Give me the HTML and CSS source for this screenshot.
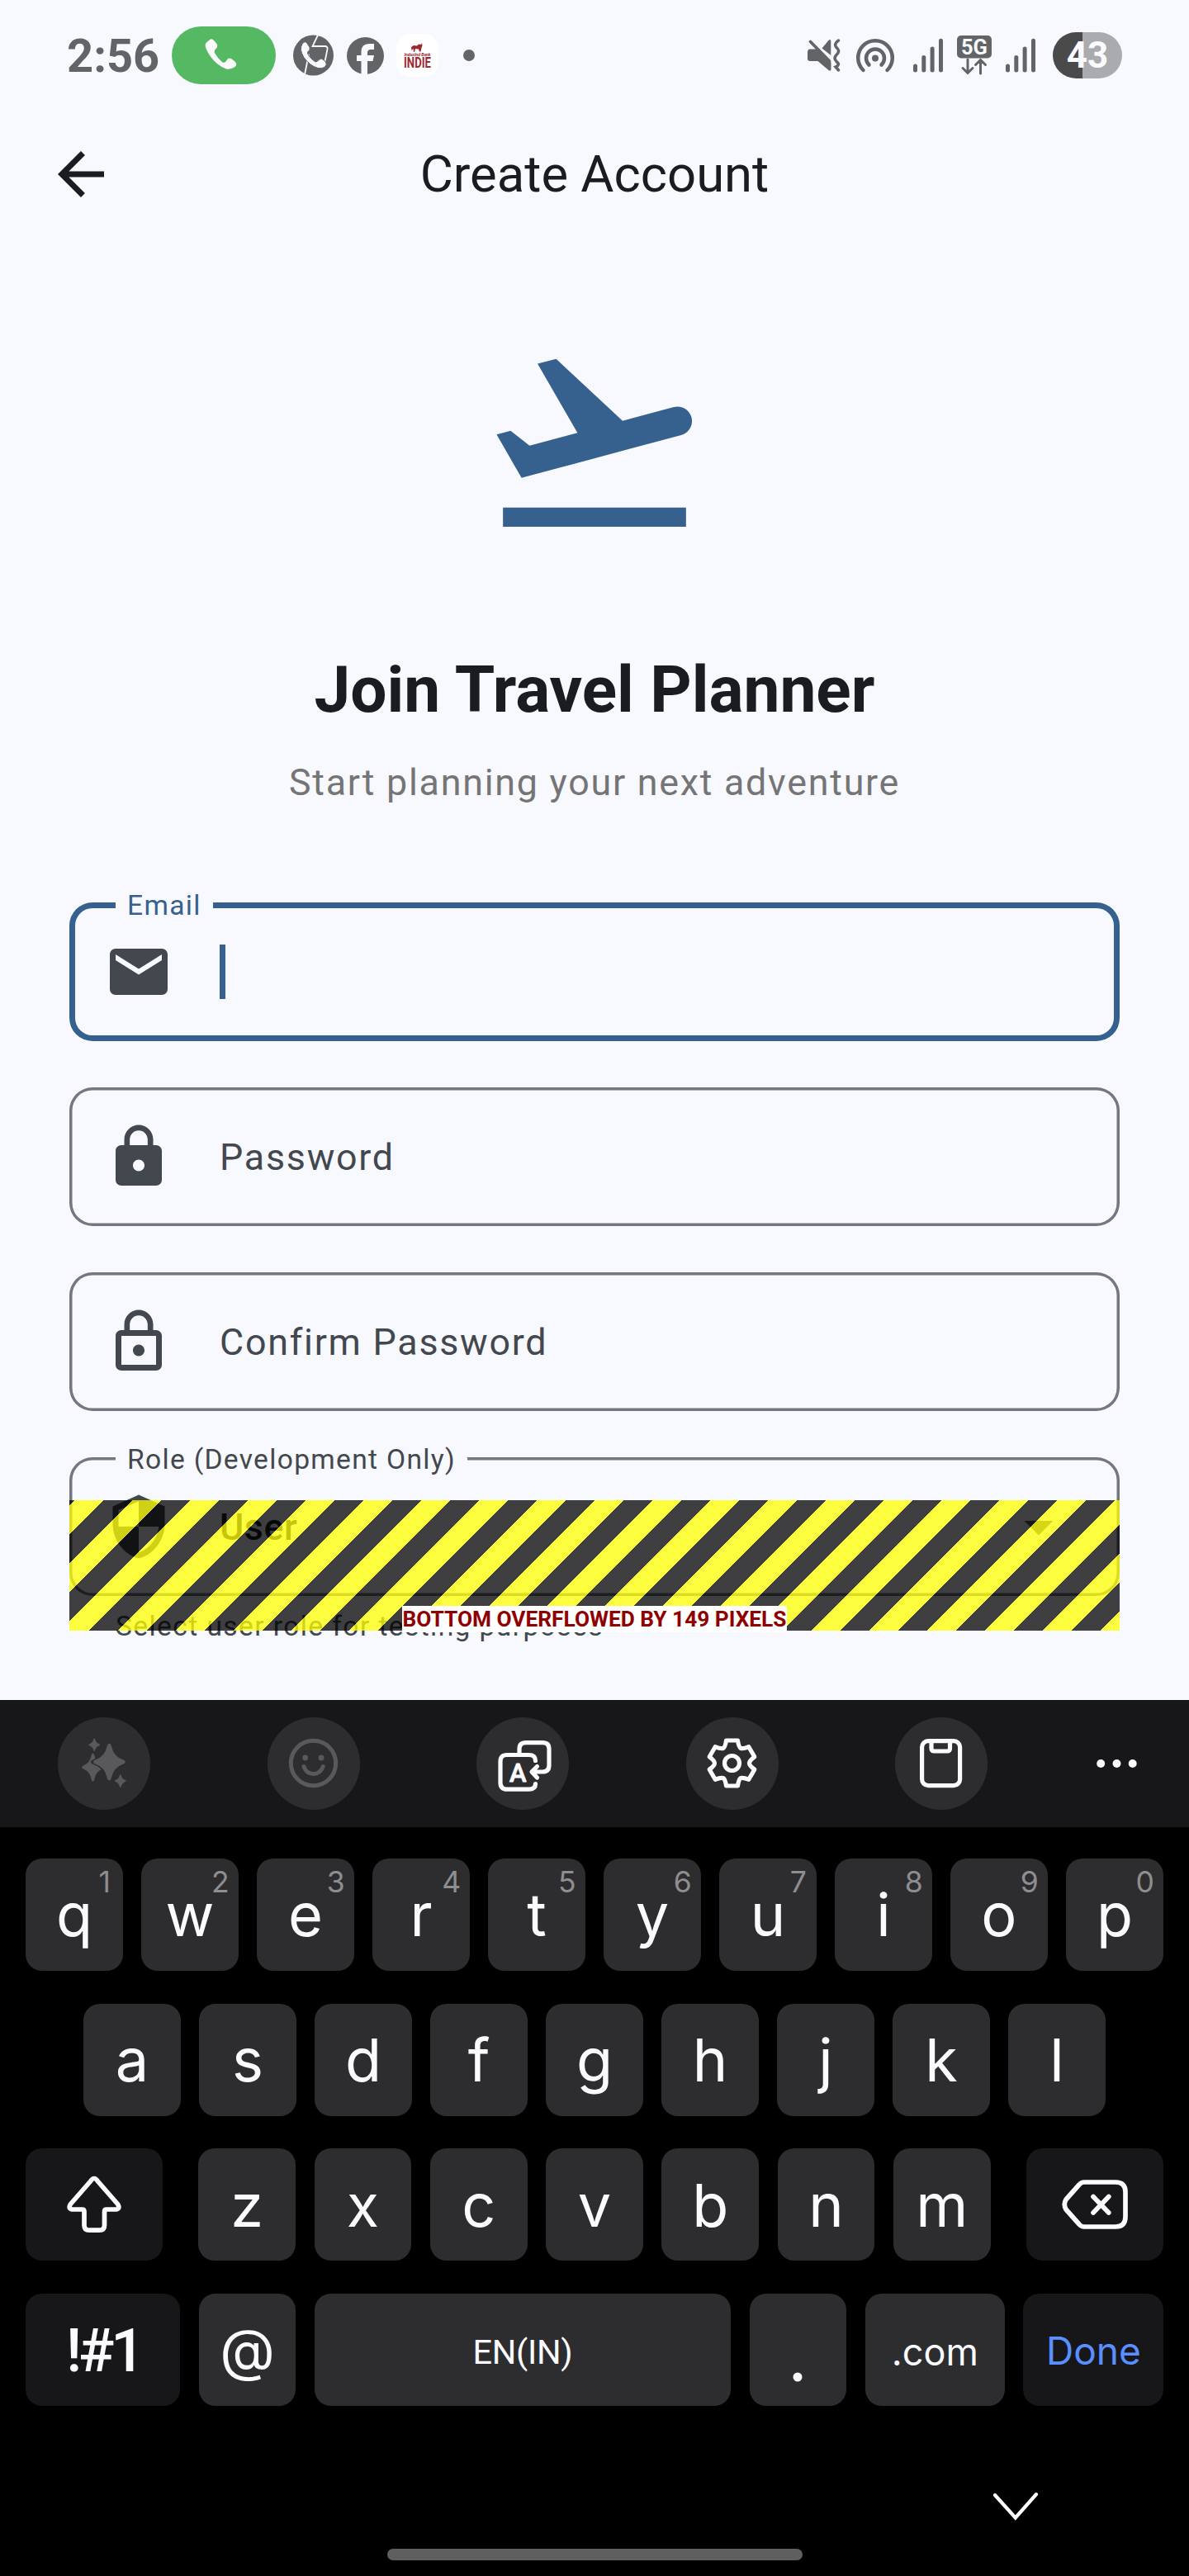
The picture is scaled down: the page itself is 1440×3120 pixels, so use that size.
FILE: index.html
```html
<!DOCTYPE html>
<html lang="en">
<head>
<meta charset="utf-8">
<title>Create Account</title>
<link rel="stylesheet" href="styles.css">
</head>
<body>
<main class="screen">
  <header class="status">
    <span class="time">2:56</span>
    <span class="call-pill">
      <svg width="126" height="70" viewBox="208 32 126 70"><path fill="#fafafa" d="M253 49Q256 45.500 259 49L262.500 53Q264.500 57 261 59.500Q258.500 62 260.500 65Q264 71 269.500 75.500Q272.500 76.500 274 74Q276 69 280 71L284.500 74.500Q288 78 284.500 81Q279.500 84.500 274 83.500Q262 79 254 67Q246 55 250 51.500Z"/></svg>
    </span>
    <svg class="ic-chrome" width="49" height="50" viewBox="355 42.500 49 50">
      <circle cx="379.500" cy="67.500" r="24.500" fill="#636466"/>
      <path d="M385 43L378.500 56.500H394Q397 57 396.500 60L393.500 75M374 66L369 91" fill="none" stroke="#f8f9ff" stroke-width="1.800"/>
      <path fill="#f8f9ff" stroke="#636466" stroke-width="1" d="M366 54Q369 49 372 53L375 58Q376 61 373 63Q371.500 65 374 68Q378 73 382 75.500Q385 75 386 73Q389 70 392 73L395 76.500Q396 79 393 82Q389 84 385 83Q375 80 368 70Q362 60 366 54Z"/>
    </svg>
    <svg class="ic-fb" width="45" height="45" viewBox="0 0 45 45">
      <circle cx="22.500" cy="22.500" r="22.500" fill="#636466"/>
      <path fill="#f8f9ff" d="M17.500 45V29H12V22H17.500V18Q17.500 8 27 8H33V15H29Q25 15 25 19V22H33L31.500 29H25V45Z"/>
    </svg>
    <svg class="ic-indie" width="51" height="52" viewBox="0 0 51 52">
      <rect width="51" height="52" rx="17" fill="#fff"/>
      <path fill="#9b2a30" d="M18 16L21 14 25 14.500 27 12.500 30 13 31 11 31.500 14 30.500 17 29.500 21.500H28L27 18.500 23 18 22 22H21L20.500 18 18.500 20Z"/>
      <text x="9.500" y="26.500" font-size="5.200" font-weight="700" font-style="italic" textLength="32" lengthAdjust="spacingAndGlyphs" fill="#9b2a30">IndusInd Bank</text>
      <text x="9" y="40.500" font-size="17.500" font-weight="700" textLength="33" lengthAdjust="spacingAndGlyphs" fill="#9b2a30">INDIE</text>
    </svg>
    <span class="more-dot"></span>
    <span class="status-right">
      <svg width="40" height="40" viewBox="978 47.500 40 40">
        <path fill="#636466" d="M978 64Q978 60 981 60H989L1006.500 76V84.500Q1006 87.500 1003.500 85.500L990.500 74.500H981Q978 74.500 978 71ZM995.500 59L1003 50Q1006.300 47 1006.300 50.500V67.500Z"/>
        <path d="M981.500 51L1004.500 74.500" stroke="#636466" stroke-width="3.800" stroke-linecap="round"/>
        <path d="M1015.500 49.500Q1009 54 1013.500 58.500Q1018 62.500 1013 67Q1009 71 1013.500 75.500Q1018 79 1012 81.500L1015.500 85.500" fill="none" stroke="#636466" stroke-width="3.500" stroke-linecap="round"/>
      </svg>
      <svg class="g19" width="46" height="41" viewBox="0 0 46 41" fill="none" stroke="#636466" stroke-width="4.500" stroke-linecap="round">
        <circle cx="23" cy="23.500" r="4" fill="#636466" stroke="none"/>
        <path d="M8.500 38A20.800 20.800 0 1 1 37.500 38M15.500 31.500A11 11 0 1 1 30.500 31.500"/>
      </svg>
      <svg class="g23" width="36" height="42" viewBox="0 0 36 42" fill="#636466"><rect y="31.500" width="5" height="10" rx="2.500"/><rect x="10.300" y="21" width="5" height="20.500" rx="2.500"/><rect x="20.600" y="10.500" width="5" height="31" rx="2.500"/><rect x="31" y=".8" width="5" height="40.700" rx="2.500"/></svg>
      <svg class="g17" width="42" height="48" viewBox="0 0 42 48">
        <rect width="42" height="27.500" rx="5" fill="#636466"/>
        <text x="21" y="22.800" text-anchor="middle" font-size="26" font-weight="700" textLength="32" lengthAdjust="spacingAndGlyphs" fill="#f8f9ff">5G</text>
        <path d="M13 29V45M7 39.500L13 45.500 19 39.500M28.500 46V30M22.500 35.500L28.500 29.500 34.500 35.500" fill="none" stroke="#636466" stroke-width="3" stroke-linecap="round"/>
      </svg>
      <svg class="g17" width="36" height="42" viewBox="0 0 36 42" fill="#636466"><rect y="31.500" width="5" height="10" rx="2.500"/><rect x="10.300" y="21" width="5" height="20.500" rx="2.500"/><rect x="20.600" y="10.500" width="5" height="31" rx="2.500"/><rect x="31" y=".8" width="5" height="40.700" rx="2.500"/></svg>
      <span class="battery">43</span>
    </span>
  </header>

  <div class="appbar">
    <svg class="back" width="84" height="84" viewBox="0 0 24 24"><path fill="#191c20" d="M20 11H7.830l5.590-5.590L12 4l-8 8 8 8 1.410-1.410L7.830 13H20v-2z"/></svg>
    <h1 class="appbar-title">Create Account</h1>
  </div>

  <svg class="hero" width="280" height="280" viewBox="0 0 24 24"><path fill="#36618e" d="M2.500 19h19v2h-19zm19.570-9.360c-.21-.8-1.040-1.280-1.840-1.060L14.920 10l-6.900-6.430-1.930.51 4.140 7.170-4.970 1.330-1.970-1.540-1.450.39 1.820 3.160.77 1.330 1.600-.43 5.310-1.420 4.350-1.160L21 11.490c.81-.23 1.280-1.050 1.070-1.850z"/></svg>
  <h2 class="title">Join Travel Planner</h2>
  <p class="subtitle">Start planning your next adventure</p>

  <form class="form">
    <div class="field focused">
      <span class="label">Email</span>
      <svg class="lead" viewBox="0 0 24 24"><path d="M20 4H4c-1.100 0-1.990.9-1.990 2L2 18c0 1.100.9 2 2 2h16c1.100 0 2-.9 2-2V6c0-1.100-.9-2-2-2zm0 4l-8 5-8-5V6l8 5 8-5v2z"/></svg>
      <span class="caret"></span>
    </div>
    <div class="field">
      <svg class="lead" viewBox="0 0 24 24"><path d="M18 8h-1V6c0-2.760-2.240-5-5-5S7 3.240 7 6v2H6c-1.100 0-2 .9-2 2v10c0 1.100.9 2 2 2h12c1.100 0 2-.9 2-2V10c0-1.100-.9-2-2-2zm-6 9c-1.100 0-2-.9-2-2s.9-2 2-2 2 .9 2 2-.9 2-2 2zm3.100-9H8.900V6c0-1.710 1.390-3.100 3.100-3.100 1.710 0 3.100 1.390 3.100 3.100v2z"/></svg>
      <span class="placeholder">Password</span>
    </div>
    <div class="field">
      <svg class="lead" viewBox="0 0 24 24"><path d="M12 17c1.100 0 2-.9 2-2s-.9-2-2-2-2 .9-2 2 .9 2 2 2zm6-9h-1V6c0-2.760-2.240-5-5-5S7 3.240 7 6v2H6c-1.100 0-2 .9-2 2v10c0 1.100.9 2 2 2h12c1.100 0 2-.9 2-2V10c0-1.100-.9-2-2-2zM8.900 6c0-1.710 1.390-3.100 3.100-3.100s3.100 1.390 3.100 3.100v2H8.900V6zM18 20H6V10h12v10z"/></svg>
      <span class="placeholder">Confirm Password</span>
    </div>
    <div class="field">
      <span class="label">Role (Development Only)</span>
      <svg class="lead" viewBox="0 0 24 24"><path d="M12 1L3 5v6c0 5.550 3.840 10.740 9 12 5.160-1.260 9-6.450 9-12V5l-9-4zm0 10.990h7c-.53 4.120-3.280 7.790-7 8.940V12H5V6.300l7-3.110v8.800z"/></svg>
      <span class="value">User</span>
      <svg class="drop" viewBox="0 0 24 24"><path fill="#616161" d="M7 10l5 5 5-5z"/></svg>
    </div>
    <p class="helper">Select user role for testing purposes</p>
  </form>

  <div class="overflow"><span class="overflow-text">BOTTOM OVERFLOWED BY 149 PIXELS</span></div>
</main>

<section class="keyboard">
  <div class="toolbar">
    <span class="tool"><svg width="112" height="112" viewBox="70 2080 112 112" fill="#59595b">
      <defs><path id="star" d="M0-1Q.1-1 .14-.85Q.26-.3 .85-.12Q1-.07 1 0Q1 .07 .85 .12Q.26 .3 .14 .85Q.1 1 0 1Q-.1 1-.14 .85Q-.26 .3-.85 .12Q-1 .07-1 0Q-1-.07-.85-.12Q-.26-.3-.14-.85Q-.1-1 0-1Z"/></defs>
      <use href="#star" transform="translate(112.500 2140.500) scale(13.500 17)"/>
      <use href="#star" transform="translate(132.300 2134) scale(22.500 26)" fill="#2d2d2f"/>
      <use href="#star" transform="translate(132.300 2134) scale(19.500 22.300)"/>
      <use href="#star" transform="translate(114.200 2113.200) scale(7 7.800)"/>
      <use href="#star" transform="translate(145.800 2157) scale(7 7.800)"/>
    </svg></span>
    <span class="tool"><svg width="112" height="112" viewBox="324 2080 112 112" fill="none" stroke="#59595b" stroke-width="5">
      <circle cx="379.500" cy="2135.500" r="27.200"/>
      <circle cx="369.700" cy="2129" r="3.400" fill="#59595b" stroke="none"/><circle cx="389" cy="2129" r="3.400" fill="#59595b" stroke="none"/>
      <path d="M368 2139.500Q371 2148.500 379.500 2148.500Q388 2148.500 391.200 2139.500" stroke-linecap="round"/>
    </svg></span>
    <span class="tool"><svg width="112" height="112" viewBox="577.500 2080 112 112" fill="none" stroke="#fbfaff" stroke-width="5.200" stroke-linecap="round" stroke-linejoin="round">
      <path d="M629.500 2122V2118.500Q629.500 2110.700 637.500 2110.700H657.500Q665.500 2110.700 665.500 2118.500V2138Q665.500 2146 657.500 2146H645M651 2139.500L644.500 2146L651 2153"/>
      <path d="M649 2132.500Q649 2125.500 641 2125.500H614.500Q606.500 2125.500 606.500 2133.500V2159Q606.500 2167.200 614.500 2167.200H641Q649 2167.200 649 2160.500"/>
      <text x="627.800" y="2157.500" text-anchor="middle" font-size="31" font-weight="500" fill="#fbfaff" stroke="#fbfaff" stroke-width=".8">A</text>
    </svg></span>
    <span class="tool"><svg width="112" height="112" viewBox="-55.500 -55.500 112 112" fill="none" stroke="#fbfaff" stroke-width="5.200" stroke-linejoin="round">
      <path d="M-7-27.500H7Q8 -20 10.500-18.200Q13-17 20.300-19.800L27.300-7.700Q21-3 21 0Q21 3 27.300 7.700L20.300 19.800Q13 17 10.500 18.200Q8 20 7 27.500H-7Q-8 20-10.500 18.200Q-13 17-20.300 19.800L-27.300 7.700Q-21 3-21 0Q-21-3-27.300-7.700L-20.300-19.800Q-13-17-10.500-18.200Q-8-20-7-27.500Z"/>
      <circle r="9"/>
    </svg></span>
    <span class="tool"><svg width="112" height="112" viewBox="1084 2080 112 112" fill="none" stroke="#fbfaff" stroke-width="5.200" stroke-linejoin="round">
      <rect x="1116.600" y="2108.600" width="46" height="54" rx="7.500"/>
      <path d="M1128 2109V2117.500Q1128 2121 1131.500 2121H1147Q1150.500 2121 1150.500 2117.500V2109"/>
    </svg></span>
    <svg class="dots" width="50" height="10" viewBox="0 0 50 10" fill="#fbfaff"><circle cx="5.200" cy="5" r="5"/><circle cx="24.500" cy="5" r="5"/><circle cx="43.700" cy="5" r="5"/></svg>
  </div>

  <div class="row row-top">
    <span class="key">q<i>1</i></span><span class="key">w<i>2</i></span><span class="key">e<i>3</i></span><span class="key">r<i>4</i></span><span class="key">t<i>5</i></span><span class="key">y<i>6</i></span><span class="key">u<i>7</i></span><span class="key">i<i>8</i></span><span class="key">o<i>9</i></span><span class="key">p<i>0</i></span>
  </div>
  <div class="row">
    <span class="key">a</span><span class="key">s</span><span class="key">d</span><span class="key">f</span><span class="key">g</span><span class="key">h</span><span class="key">j</span><span class="key">k</span><span class="key">l</span>
  </div>
  <div class="row row-third">
    <span class="key fn wide"><svg width="166" height="136" viewBox="0 0 166 136"><path d="M78.500 40Q83 33 87.500 40L111.500 67.500Q115.500 74 108 74H98Q95.500 74 95.500 76.500V93Q95.500 99.200 89.500 99.200H77Q71 99.200 71 93V76.500Q71 74 68.500 74H58Q50.500 74 54.500 67.500Z" fill="none" stroke="#fbfaff" stroke-width="5.700" stroke-linejoin="round"/></svg></span>
    <span class="letters"><span class="key">z</span><span class="key">x</span><span class="key">c</span><span class="key">v</span><span class="key">b</span><span class="key">n</span><span class="key">m</span></span>
    <span class="key fn wide"><svg width="166" height="136" viewBox="0 0 166 136" fill="none" stroke="#fbfaff" stroke-width="5.700" stroke-linejoin="round" stroke-linecap="round"><path d="M70 41H108Q120 41 120 53V83Q120 95 108 95H70Q66.500 95 64 92L48 74Q44.500 68 48 62L64 44Q66.500 41 70 41Z"/><path d="M81 58.500L99.800 78M99.800 58.500L81 78"/></svg></span>
  </div>
  <div class="row">
    <span class="key fn sym">!#1</span>
    <span class="key at">@</span>
    <span class="key space">EN(IN)</span>
    <span class="key dot"><svg width="12" height="12" viewBox="0 0 12 12"><circle cx="6" cy="6" r="5.500" fill="#fbfaff"/></svg></span>
    <span class="key com">.com</span>
    <span class="key fn done">Done</span>
  </div>
  <div class="nav">
    <svg class="hide" width="58" height="38" viewBox="0 0 58 38"><path d="M4 5L28.800 32.500 54 4" fill="none" stroke="#fff" stroke-width="4.200" stroke-linecap="round"/></svg>
    <span class="home"></span>
  </div>
</section>
</body>
</html>
```
FILE: styles.css
```css
* { box-sizing: border-box; }
body {
  margin: 0;
  width: 1440px;
  height: 3120px;
  overflow: hidden;
  background: #f8f9ff;
  font-family: Roboto, "Liberation Sans", sans-serif;
}
h1, h2, p { margin: 0; font-weight: 400; }
svg { display: block; flex: none; overflow: visible; }

.screen { position: relative; height: 2059px; display: flex; flex-direction: column; color: #191c20; }

/* Status bar */
.status { height: 134px; display: flex; align-items: center; padding: 0 81px; flex: none; }
.time { width: 127px; font-size: 56px; font-weight: 700; color: #636466; line-height: 134px; padding-top: 1px; }
.call-pill { width: 126px; height: 70px; border-radius: 35px; background: #55b964; }
.ic-chrome { margin-left: 21px; }
.ic-fb { margin-left: 16px; }
.ic-indie { margin-left: 15px; }
.more-dot { width: 14px; height: 14px; border-radius: 50%; background: #636466; margin-left: 30px; }
.status-right { margin-left: auto; display: flex; align-items: center; }
.g19 { margin-left: 19px; }
.g23 { margin-left: 23px; }
.g17 { margin-left: 17px; }
.battery {
  width: 84px;
  height: 56px;
  margin-left: 21px;
  border-radius: 28px;
  background: linear-gradient(90deg, #4a4a4b 36px, #aaabaf 36px);
  color: #fbfbff;
  font-size: 44px;
  font-weight: 700;
  line-height: 57px;
  text-align: center;
}

/* App bar */
.appbar { height: 154px; display: grid; grid-template-columns: 196px 1fr 196px; align-items: center; flex: none; }
.back { margin-left: 56px; }
.appbar-title { font-size: 61.600px; line-height: 154px; text-align: center; }

/* Intro */
.hero { margin: 104.750px auto 0; }
.title { margin-top: 112.500px; font-size: 78.400px; font-weight: 700; line-height: 100px; text-align: center; }
.subtitle { margin-top: 31.200px; font-size: 44.800px; letter-spacing: 1.750px; line-height: 64px; text-align: center; color: #757575; }

/* Form */
.form { margin: 112.600px 84px 0; display: flex; flex-direction: column; }
.field {
  position: relative;
  height: 168px;
  display: flex;
  align-items: center;
  padding: 0 56px 0 42px;
  border-radius: 28px;
  box-shadow: inset 0 0 0 3.500px #73777f;
  margin-bottom: 56px;
}
.field.focused { box-shadow: inset 0 0 0 7px #36618e; }
.field:nth-of-type(4) { margin-bottom: 17px; }
.label {
  position: absolute;
  left: 56px;
  top: -17.500px;
  padding: 0 14px;
  background: #f8f9ff;
  font-size: 33.600px;
  letter-spacing: 1.310px;
  line-height: 40px;
  color: #43474e;
}
.focused .label { top: -16px; color: #36618e; }
.lead { width: 84px; height: 84px; fill: #43474e; margin-right: 56px; }
.caret { width: 7px; height: 66.500px; background: #36618e; }
.placeholder { font-size: 44.800px; letter-spacing: 1.750px; line-height: 64px; padding-top: 1px; color: #43474e; }
.value { font-size: 44.800px; font-weight: 500; letter-spacing: .53px; line-height: 64px; padding-top: 1px; }
.drop { width: 84px; height: 84px; margin-left: auto; }
.helper { padding-left: 56px; font-size: 33.600px; letter-spacing: 1.400px; line-height: 40px; color: #43474e; }

/* Layout overflow warning drawn over the end of the form */
.overflow {
  position: absolute;
  left: 84px;
  right: 84px;
  top: 1816.500px;
  height: 158.500px;
  display: flex;
  justify-content: center;
  align-items: flex-end;
  background: repeating-linear-gradient(135deg,
    rgba(0, 0, 0, .75) 0 4.700px,
    rgba(255, 255, 0, .75) 4.700px 29.450px,
    rgba(0, 0, 0, .75) 29.450px 49.497px);
}
.overflow-text { width: 466px; height: 32px; margin-bottom: -2px; background: #fff; color: #900000; font-size: 26.250px; font-weight: 700; line-height: 32px; white-space: nowrap; text-align: center; }

/* Keyboard */
.keyboard { height: 1061px; background: #000; color: #fbfaff; font-family: Inter, Roboto, sans-serif; display: flex; flex-direction: column; }
.toolbar { height: 153.700px; flex: none; background: #171719; display: flex; align-items: center; padding-left: 70px; gap: 141.600px; }
.tool { width: 112px; height: 112px; border-radius: 50%; background: #2d2d2f; flex: none; }
.tool text { font-family: Roboto, sans-serif; }
.dots { margin-left: -9.500px; }
.row { height: 136px; margin-top: 39.700px; padding: 0 31.200px; display: flex; justify-content: center; gap: 22.400px; flex: none; }
.row-top { margin-top: 38.300px; }
.key {
  position: relative;
  width: 117.600px;
  border-radius: 20px;
  background: #2d2d2f;
  font-size: 72px;
  display: flex;
  align-items: center;
  justify-content: center;
  line-height: 84px;
  padding-top: 1px;
  flex: none;
}
.key i { position: absolute; left: 75.500px; width: 40px; top: 8px; text-align: center; font-style: normal; font-size: 35.500px; line-height: 42px; color: #8e8e90; }
.fn { background: #171719; }
.row-third { justify-content: space-between; gap: 0; }
.letters { display: flex; gap: 22.700px; }
.wide { width: 166px; padding: 0; }
.sym { width: 187.500px; font: 500 72px Roboto, sans-serif; letter-spacing: -4px; padding: 3px 0 0 2px; }
.at { font-size: 69px; padding-top: 0; }
.space { width: 504.500px; font: 400 41.500px Roboto, sans-serif; letter-spacing: -.3px; padding-top: 4px; }
.dot { align-items: flex-end; padding-bottom: 29.500px; }
.com { width: 169.500px; font-size: 45px; padding-top: 5px; }
.done { width: 169.700px; font-size: 46px; color: #5a8fff; padding-top: 2px; }
.nav { flex: 1; display: flex; flex-direction: column; }
.hide { margin: 103.100px 0 0 1200.500px; }
.home { width: 503px; height: 14px; border-radius: 7px; background: #5f5f5f; margin: 32px auto 0; }
```
